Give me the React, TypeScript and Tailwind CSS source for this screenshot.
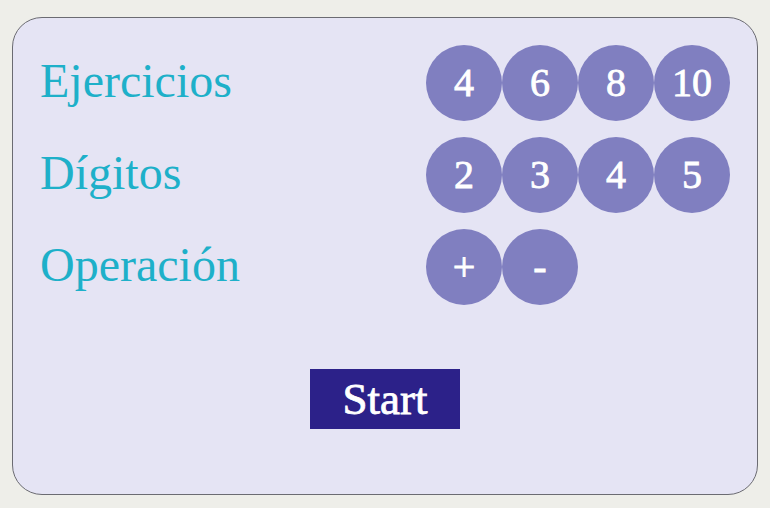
import React from "react"

const rows = [
  { label: "Ejercicios", options: ["4", "6", "8", "10"] },
  { label: "Dígitos", options: ["2", "3", "4", "5"] },
  { label: "Operación", options: ["+", "-"] },
]

export default function App() {
  return (
    <div className="min-h-[508px] w-[770px] bg-[#eeeee9] pt-[17px] pl-[12px] font-['Liberation_Serif',serif]">
      <div className="flex h-[478px] w-[746px] flex-col rounded-[30px] border border-[#6b6b72] bg-[#e5e4f4] px-[27px] pt-[27px]">
        <div className="flex flex-col gap-4">
          {rows.map((row) => (
            <div key={row.label} className="flex h-[76px] items-center">
              <div className="w-[386px] pb-[4px] text-[48px] leading-none text-[#1eb0c9]">{row.label}</div>
              <div className="flex">
                {row.options.map((o) => (
                  <button
                    key={o}
                    className="flex h-[76px] w-[76px] items-center justify-center rounded-full bg-[#807fc0] text-[40px] leading-none text-white [-webkit-text-stroke:0.8px_white]"
                  >
                    {o}
                  </button>
                ))}
              </div>
            </div>
          ))}
        </div>
        <div className="mt-[64px] flex justify-center">
          <button className="flex h-[60px] w-[150px] items-center justify-center bg-[#2c2189] text-[45px] leading-none text-white [-webkit-text-stroke:0.8px_white]">
            Start
          </button>
        </div>
      </div>
    </div>
  )
}
